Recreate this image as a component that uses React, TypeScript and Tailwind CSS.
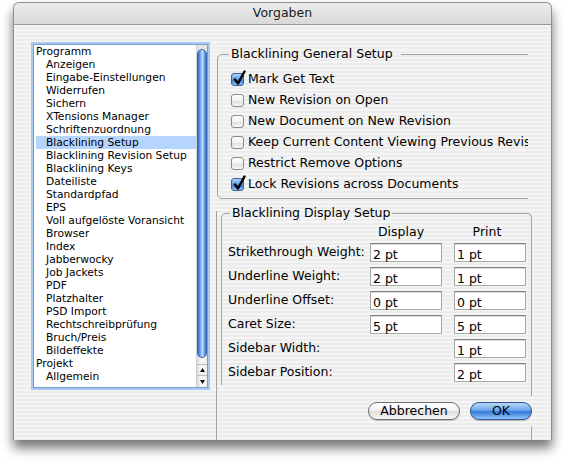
import React from 'react';

const listItems: { label: string; sub: boolean; selected?: boolean }[] = [
  { label: 'Programm', sub: false },
  { label: 'Anzeigen', sub: true },
  { label: 'Eingabe-Einstellungen', sub: true },
  { label: 'Widerrufen', sub: true },
  { label: 'Sichern', sub: true },
  { label: 'XTensions Manager', sub: true },
  { label: 'Schriftenzuordnung', sub: true },
  { label: 'Blacklining Setup', sub: true, selected: true },
  { label: 'Blacklining Revision Setup', sub: true },
  { label: 'Blacklining Keys', sub: true },
  { label: 'Dateiliste', sub: true },
  { label: 'Standardpfad', sub: true },
  { label: 'EPS', sub: true },
  { label: 'Voll aufgelöste Voransicht', sub: true },
  { label: 'Browser', sub: true },
  { label: 'Index', sub: true },
  { label: 'Jabberwocky', sub: true },
  { label: 'Job Jackets', sub: true },
  { label: 'PDF', sub: true },
  { label: 'Platzhalter', sub: true },
  { label: 'PSD Import', sub: true },
  { label: 'Rechtschreibprüfung', sub: true },
  { label: 'Bruch/Preis', sub: true },
  { label: 'Bildeffekte', sub: true },
  { label: 'Projekt', sub: false },
  { label: 'Allgemein', sub: true },
];

const options = [
  { label: 'Mark Get Text', checked: true },
  { label: 'New Revision on Open', checked: false },
  { label: 'New Document on New Revision', checked: false },
  { label: 'Keep Current Content Viewing Previous Revisions', checked: false },
  { label: 'Restrict Remove Options', checked: false },
  { label: 'Lock Revisions across Documents', checked: true },
];

const displayRows: { label: string; display?: string; print: string }[] = [
  { label: 'Strikethrough Weight:', display: '2 pt', print: '1 pt' },
  { label: 'Underline Weight:', display: '2 pt', print: '1 pt' },
  { label: 'Underline Offset:', display: '0 pt', print: '0 pt' },
  { label: 'Caret Size:', display: '5 pt', print: '5 pt' },
  { label: 'Sidebar Width:', print: '1 pt' },
  { label: 'Sidebar Position:', print: '2 pt' },
];

const Checkbox: React.FC<{ checked: boolean }> = ({ checked }) => (
  <span
    className={
      checked
        ? 'relative w-[13px] h-[13px] shrink-0 rounded-[3px] border border-[#3d5f95] bg-[linear-gradient(to_bottom,#b3d5fa,#5b98e6_50%,#3f82dc_60%,#8fc3f6)]'
        : 'relative w-[13px] h-[13px] shrink-0 rounded-[3px] border border-[#8a8a8a] bg-[linear-gradient(to_bottom,#ffffff,#f2f2f2_50%,#e2e2e2_60%,#f7f7f7)]'
    }
  >
    {checked && (
      <svg className="absolute left-[1px] top-[-4px] w-[13px] h-[16px]" viewBox="0 0 13 16">
        <path d="M2 9.5 L5 13.5 L11.5 1.5" fill="none" stroke="#000" strokeWidth={2.4} strokeLinecap="round" strokeLinejoin="round" />
      </svg>
    )}
  </span>
);

const Field: React.FC<{ value: string }> = ({ value }) => (
  <div className="h-[19px] w-[72px] shrink-0 bg-white border border-[#a9a9a9] border-t-[#7c7c7c] shadow-[inset_0_1px_1px_rgba(0,0,0,0.15)] pl-[2px] pt-[3px] leading-[15px]">
    {value}
  </div>
);

export default function App() {
  return (
    <div className="w-[565px] h-[463px] bg-white overflow-hidden pt-[2px] pl-[13px] font-['DejaVu_Sans',sans-serif] text-black">
      <div className="w-[539px] h-[438px] flex flex-col rounded-t-[6px] border-x border-t border-[#8e8e8e] shadow-[0_8px_12px_rgba(0,0,0,0.55)] bg-[repeating-linear-gradient(to_bottom,#ececec_0px,#ececec_2px,#f5f5f5_2px,#f5f5f5_4px)]">
        {/* Title bar */}
        <div className="h-[22px] shrink-0 flex items-center justify-center rounded-t-[6px] border-b border-[#9a9a9a] bg-[linear-gradient(to_bottom,#ededed,#d8d8d8)] text-[12.5px] text-[#1a1a1a]">
          Vorgaben
        </div>

        {/* Body */}
        <div className="flex flex-1 pl-[19px]">
          {/* Preference list */}
          <div className="mt-[19px] w-[175px] h-[344px] flex border border-[#7d9cc9] shadow-[0_0_0_2px_#a9c9ef] bg-white">
            <div className="flex-1 pl-[2px] text-[10.7px] leading-[13px]">
              {listItems.map((item) => (
                <div
                  key={item.label}
                  className={`h-[13px] whitespace-nowrap ${item.sub ? 'pl-[10px]' : 'pl-0'} ${item.selected ? 'bg-[#b5d5ff]' : ''}`}
                >
                  {item.label}
                </div>
              ))}
            </div>
            {/* Scrollbar */}
            <div className="w-[11px] flex flex-col bg-[linear-gradient(to_right,#dcdcdc,#f8f8f8_40%,#eeeeee)] border-l border-[#d0d0d0]">
              <div className="h-[4px] bg-[#e4e4e4]" />
              <div className="h-[309px] rounded-full border border-[#3467b5] bg-[linear-gradient(to_right,#2c69c9,#7fb5f2_35%,#c0defc_55%,#6aa3ea_80%,#2f6fd0)]" />
              <div className="flex-1" />
              <div className="h-[11px] flex items-center justify-center border-t border-[#bdbdbd]">
                <svg width="5" height="4" viewBox="0 0 5 4">
                  <path d="M2.5 0 L5 4 L0 4 Z" fill="#111" />
                </svg>
              </div>
              <div className="h-[12px] flex items-center justify-center border-t border-[#bdbdbd]">
                <svg width="5" height="4" viewBox="0 0 5 4">
                  <path d="M0 0 L5 0 L2.5 4 Z" fill="#111" />
                </svg>
              </div>
            </div>
          </div>

          {/* Settings */}
          <div className="ml-[8px] flex flex-col text-[12.5px]">
            <div className="mt-[21px] w-[312px] overflow-hidden">
              <fieldset className="ml-[1px] w-[330px] min-w-0 rounded-[5px] border border-[#a3a3a3] pl-[13px] pt-[7px] pb-[3px]">
                <legend className="ml-[-2px] pl-[2px] pr-[8px] leading-[16px]">Blacklining General Setup</legend>
                {options.map((opt) => (
                  <div key={opt.label} className="h-[21px] flex items-center gap-[4px] whitespace-nowrap">
                    <Checkbox checked={opt.checked} />
                    <span>{opt.label}</span>
                  </div>
                ))}
              </fieldset>
            </div>

            {/* Display setup area, with divider line on the left */}
            <div className="mt-[12px] w-[316px] flex-1 flex flex-col border-l border-[#a3a3a3]">
              <fieldset className="mt-[-6px] ml-[4px] w-[311px] min-w-0 rounded-t-[5px] border-x border-t border-[#a3a3a3] pb-[3px]">
                <legend className="ml-[8px] pl-[2px] pr-[2px] leading-[16px]">Blacklining Display Setup</legend>
                <div className="flex flex-col gap-[5px] pl-[6px]">
                  <div className="mt-[3px] mb-[-2px] h-[16px] flex leading-[16px]">
                    <div className="w-[142px] shrink-0" />
                    <div className="w-[72px] shrink-0 text-center pr-[10px]">Display</div>
                    <div className="ml-[12px] w-[72px] shrink-0 text-center pr-[6px]">Print</div>
                  </div>
                  {displayRows.map((row) => (
                    <div key={row.label} className="h-[19px] flex items-center">
                      <div className="w-[142px] shrink-0 whitespace-nowrap leading-[15px] pb-[2px]">{row.label}</div>
                      {row.display ? <Field value={row.display} /> : <div className="w-[72px] shrink-0" />}
                      <div className="ml-[12px]">
                        <Field value={row.print} />
                      </div>
                    </div>
                  ))}
                </div>
              </fieldset>
              <div className="ml-[4px] w-[311px] h-[11px] border-r border-[#a3a3a3]" />

              {/* Buttons */}
              <div className="mt-[6px] ml-[151px] flex gap-[10px]">
                <button className="w-[92px] h-[18px] rounded-full border border-[#6d6d6d] bg-[linear-gradient(to_bottom,#ffffff,#f3f3f3_45%,#dedede_55%,#f8f8f8)] text-[12.5px] leading-[16px] shadow-[0_1px_1px_rgba(0,0,0,0.2)]">
                  Abbrechen
                </button>
                <button className="w-[62px] h-[18px] rounded-full border border-[#2c5190] bg-[linear-gradient(to_bottom,#b9d8f8,#6ea8ec_45%,#3379db_55%,#93c8fb)] text-[12.5px] leading-[16px] shadow-[0_1px_1px_rgba(0,0,0,0.25)]">
                  OK
                </button>
              </div>
              <div className="mt-[6px] ml-[4px] w-[311px] flex-1 border-r border-[#a3a3a3]" />
            </div>
          </div>
        </div>
      </div>
    </div>
  );
}
